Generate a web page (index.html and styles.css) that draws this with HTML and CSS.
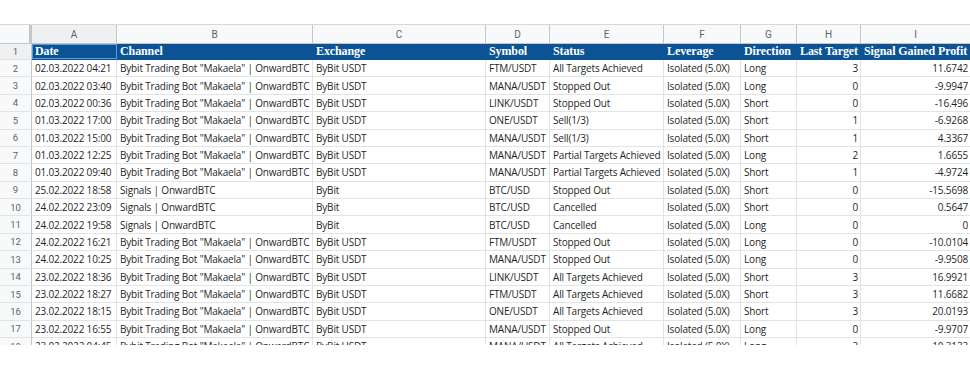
FILE: index.html
```html
<!DOCTYPE html>
<html>
<head>
<meta charset="utf-8">
<link rel="stylesheet" href="styles.css">
</head>
<body>
<div class="topbar"></div>
<div class="sheet">
  <div class="grid">
    <div class="corner"></div>
    <div class="colhead sel">A</div>
    <div class="colhead">B</div>
    <div class="colhead">C</div>
    <div class="colhead">D</div>
    <div class="colhead">E</div>
    <div class="colhead">F</div>
    <div class="colhead">G</div>
    <div class="colhead">H</div>
    <div class="colhead">I</div>

    <div class="rownum selrow hdrrow">1</div>
    <div class="hc active">Date</div>
    <div class="hc">Channel</div>
    <div class="hc">Exchange</div>
    <div class="hc">Symbol</div>
    <div class="hc">Status</div>
    <div class="hc">Leverage</div>
    <div class="hc">Direction</div>
    <div class="hc">Last Target</div>
    <div class="hc">Signal Gained Profit</div>
  </div>
  <div class="grid body" id="body"></div>
</div>
<script src="script.js"></script>
</body>
</html>
```

FILE: script.js
```javascript
const rows = [
  ["02.03.2022 04:21","Bybit Trading Bot \"Makaela\" | OnwardBTC","ByBit USDT","FTM/USDT","All Targets Achieved","Isolated (5.0X)","Long","3","11.6742"],
  ["02.03.2022 03:40","Bybit Trading Bot \"Makaela\" | OnwardBTC","ByBit USDT","MANA/USDT","Stopped Out","Isolated (5.0X)","Long","0","-9.9947"],
  ["02.03.2022 00:36","Bybit Trading Bot \"Makaela\" | OnwardBTC","ByBit USDT","LINK/USDT","Stopped Out","Isolated (5.0X)","Short","0","-16.496"],
  ["01.03.2022 17:00","Bybit Trading Bot \"Makaela\" | OnwardBTC","ByBit USDT","ONE/USDT","Sell(1/3)","Isolated (5.0X)","Short","1","-6.9268"],
  ["01.03.2022 15:00","Bybit Trading Bot \"Makaela\" | OnwardBTC","ByBit USDT","MANA/USDT","Sell(1/3)","Isolated (5.0X)","Short","1","4.3367"],
  ["01.03.2022 12:25","Bybit Trading Bot \"Makaela\" | OnwardBTC","ByBit USDT","MANA/USDT","Partial Targets Achieved","Isolated (5.0X)","Long","2","1.6655"],
  ["01.03.2022 09:40","Bybit Trading Bot \"Makaela\" | OnwardBTC","ByBit USDT","MANA/USDT","Partial Targets Achieved","Isolated (5.0X)","Short","1","-4.9724"],
  ["25.02.2022 18:58","Signals | OnwardBTC","ByBit","BTC/USD","Stopped Out","Isolated (5.0X)","Short","0","-15.5698"],
  ["24.02.2022 23:09","Signals | OnwardBTC","ByBit","BTC/USD","Cancelled","Isolated (5.0X)","Short","0","0.5647"],
  ["24.02.2022 19:58","Signals | OnwardBTC","ByBit","BTC/USD","Cancelled","Isolated (5.0X)","Long","0","0"],
  ["24.02.2022 16:21","Bybit Trading Bot \"Makaela\" | OnwardBTC","ByBit USDT","FTM/USDT","Stopped Out","Isolated (5.0X)","Long","0","-10.0104"],
  ["24.02.2022 10:25","Bybit Trading Bot \"Makaela\" | OnwardBTC","ByBit USDT","MANA/USDT","Stopped Out","Isolated (5.0X)","Long","0","-9.9508"],
  ["23.02.2022 18:36","Bybit Trading Bot \"Makaela\" | OnwardBTC","ByBit USDT","LINK/USDT","All Targets Achieved","Isolated (5.0X)","Short","3","16.9921"],
  ["23.02.2022 18:27","Bybit Trading Bot \"Makaela\" | OnwardBTC","ByBit USDT","FTM/USDT","All Targets Achieved","Isolated (5.0X)","Short","3","11.6682"],
  ["23.02.2022 18:15","Bybit Trading Bot \"Makaela\" | OnwardBTC","ByBit USDT","ONE/USDT","All Targets Achieved","Isolated (5.0X)","Short","3","20.0193"],
  ["23.02.2022 16:55","Bybit Trading Bot \"Makaela\" | OnwardBTC","ByBit USDT","MANA/USDT","Stopped Out","Isolated (5.0X)","Long","0","-9.9707"],
  ["23.02.2022 04:45","Bybit Trading Bot \"Makaela\" | OnwardBTC","ByBit USDT","MANA/USDT","All Targets Achieved","Isolated (5.0X)","Long","3","10.3133"]
];
const body = document.getElementById("body");
rows.forEach((r, i) => {
  const n = document.createElement("div");
  n.className = "rownum";
  n.textContent = i + 2;
  body.appendChild(n);
  r.forEach((v, j) => {
    const c = document.createElement("div");
    c.className = "cell" + (j >= 7 ? " num" : "");
    c.textContent = v;
    body.appendChild(c);
  });
});
```

FILE: styles.css
```css
html, body {
  margin: 0;
  padding: 0;
  background: #ffffff;
}
body {
  width: 970px;
  height: 370px;
  overflow: hidden;
}
.topbar {
  height: 25px;
  background: #ffffff;
  border-bottom: 1px solid #d6d8da;
  box-sizing: border-box;
}
.sheet {
  height: 320px;
  overflow: hidden;
}
.grid {
  display: grid;
  grid-template-columns: 32px 85px 196px 173px 64px 114px 77px 56px 64px 110px;
  width: 971px;
}
.grid > div {
  box-sizing: border-box;
  white-space: nowrap;
  overflow: hidden;
}
.corner {
  height: 19px;
  background: #f8f9fa;
  border-right: 3px solid #c4c7c9;
  border-bottom: 1px solid #c4c7c9;
}
.colhead {
  height: 19px;
  background: #f8f9fa;
  border-right: 1px solid #c4c7c9;
  border-bottom: 1px solid #c4c7c9;
  color: #5f6368;
  font-family: "Roboto", "Liberation Sans", sans-serif;
  font-size: 10px;
  display: flex;
  align-items: center;
  justify-content: center;
}
.colhead.sel {
  background: #eef0f2;
}
.rownum {
  background: #f8f9fa;
  border-right: 1px solid #c4c7c9;
  border-bottom: 1px solid #e2e3e3;
  color: #5f6368;
  font-family: "Roboto", "Liberation Sans", sans-serif;
  font-size: 9.5px;
  display: flex;
  align-items: center;
  justify-content: center;
  height: 17.375px;
}
.rownum.hdrrow {
  height: 16px;
  background: #eef0f2;
}
.hc {
  height: 16px;
  background: #0b5394;
  color: #ffffff;
  font-family: "Liberation Serif", "Times New Roman", serif;
  font-weight: bold;
  font-size: 12px;
  letter-spacing: -0.1px;
  padding: 0 2px 0 3px;
  display: flex;
  align-items: center;
  border-bottom: 1px solid #0b5394;
}
.hc.active {
  box-shadow: inset 0 0 0 1px #5b9bdc;
}
.cell {
  height: 17.375px;
  border-right: 1px solid #e2e3e3;
  border-bottom: 1px solid #e2e3e3;
  font-family: "Open Sans", "Noto Sans", sans-serif;
  font-size: 10px;
  letter-spacing: -0.18px;
  color: #1f1f1f;
  padding: 0 3px;
  display: flex;
  align-items: center;
}
.cell.num {
  justify-content: flex-end;
  padding-right: 2px;
}
```
